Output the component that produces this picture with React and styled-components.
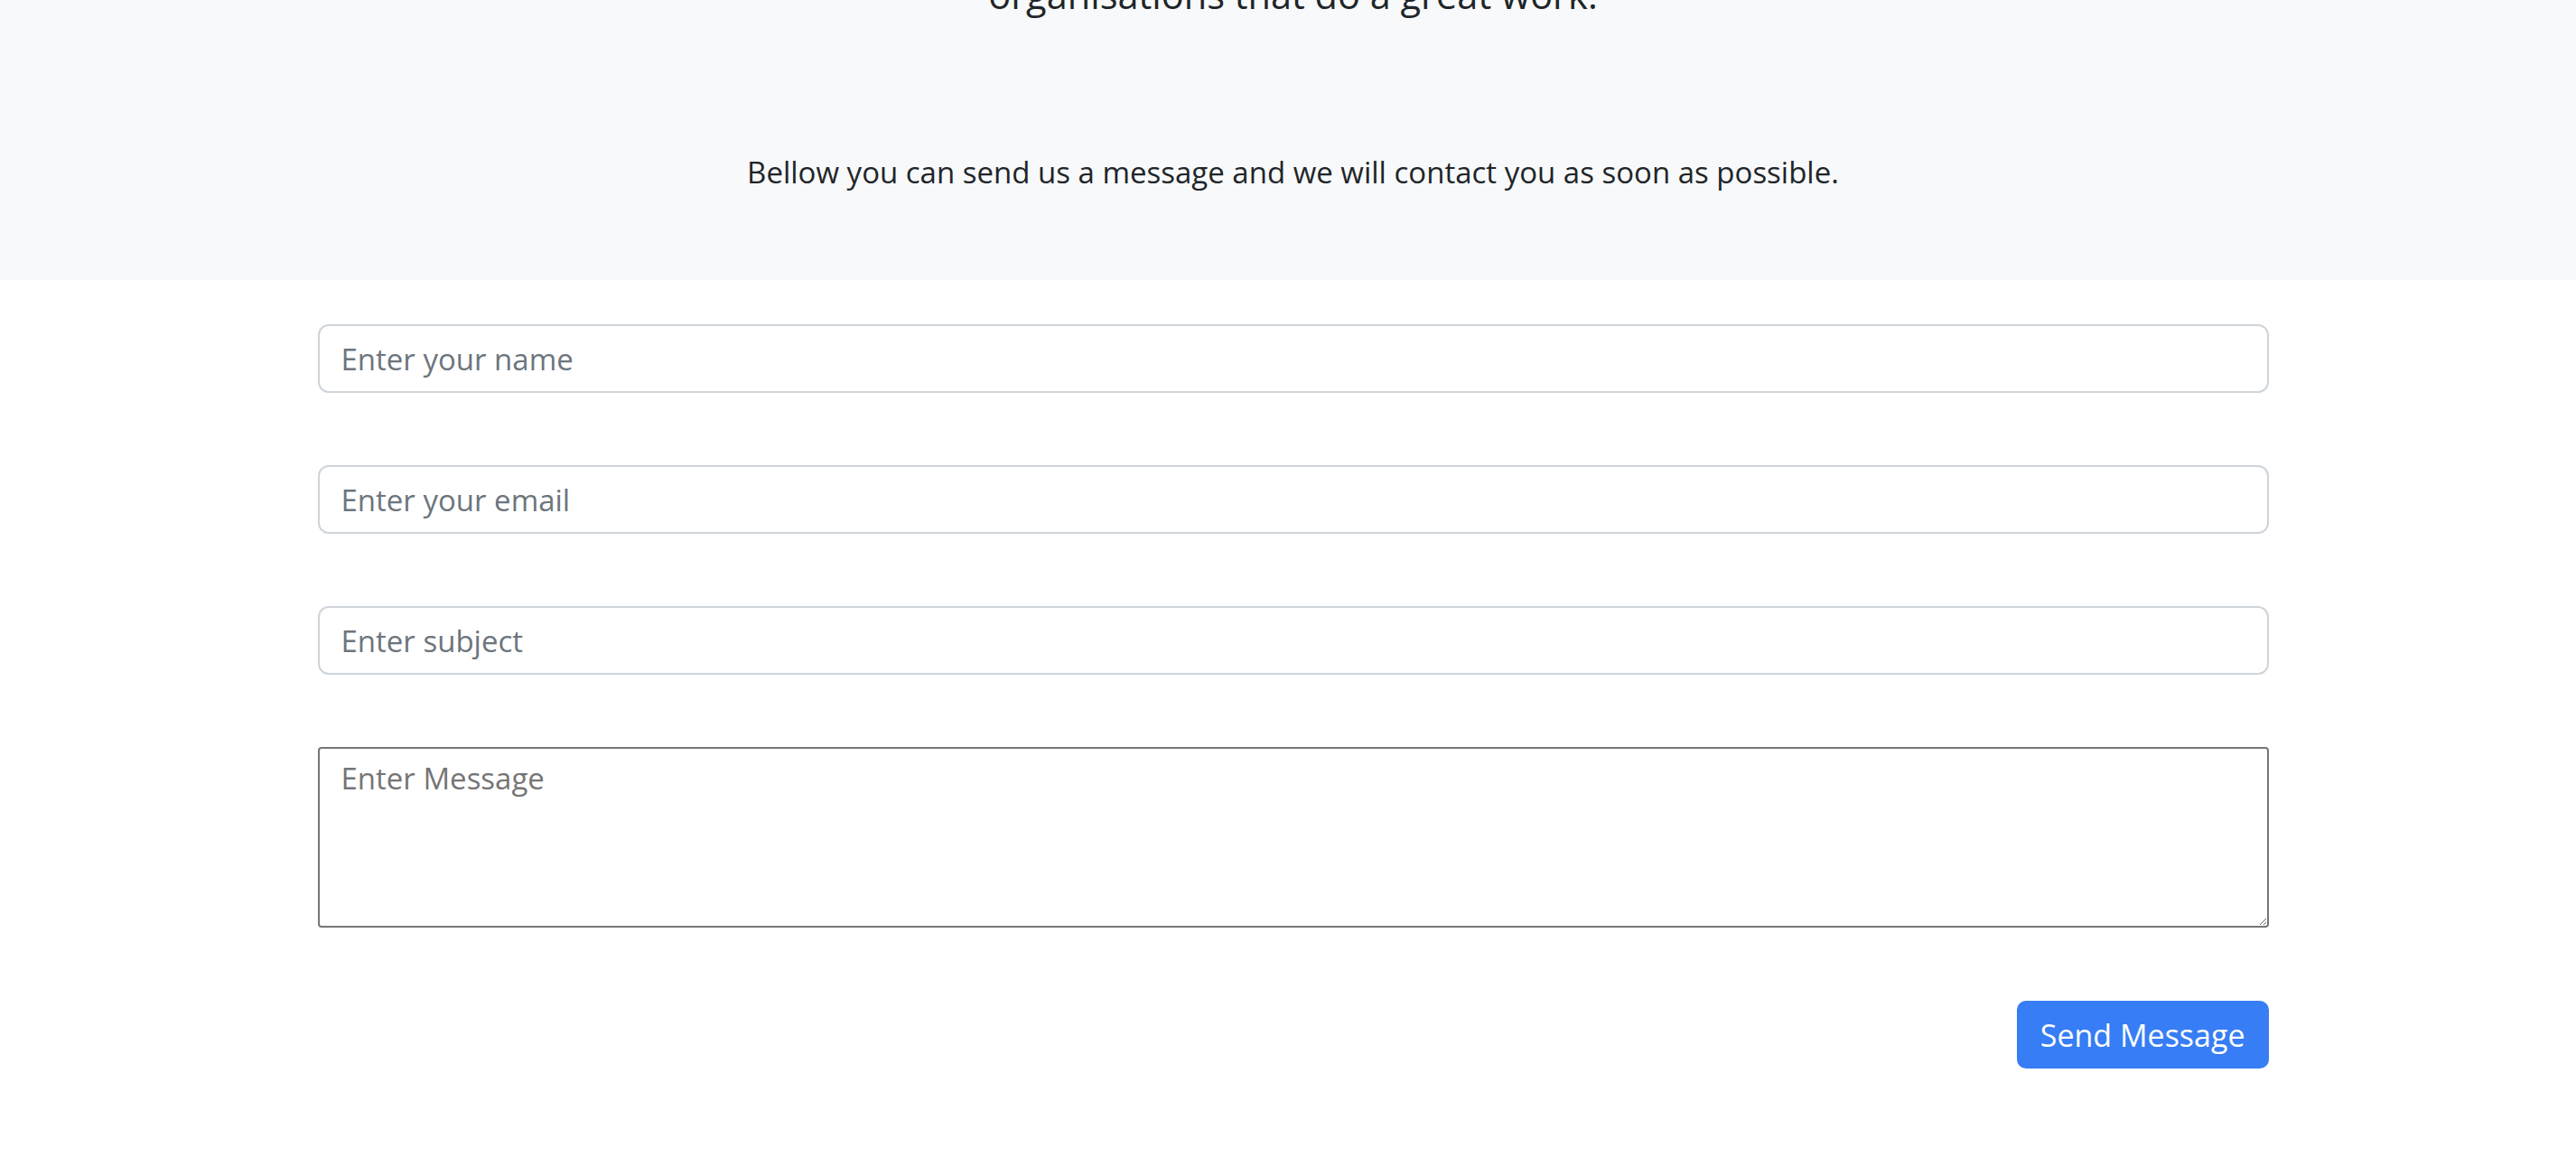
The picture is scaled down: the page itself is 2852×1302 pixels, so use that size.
import React from "react";
import styled, { createGlobalStyle } from "styled-components";

const Global = createGlobalStyle`
  html, body { margin: 0; padding: 0; background: #ffffff; }
  body { font-family: "Open Sans", Lato, sans-serif; color: #212529; overflow: hidden; }
  * { box-sizing: border-box; }
`;

const Page = styled.div`
  width: 2852px;
  min-height: 1302px;
  padding-left: 11px;
`;

const Hero = styled.section`
  background: #f8f9fa;
  height: 310px;
  margin-left: -11px;
  padding-left: 11px;
  display: flex;
  flex-direction: column;
  align-items: center;
  overflow: hidden;
`;

const Heading = styled.h2`
  margin: -30px 0 0;
  font-size: 41.5px;
  line-height: 48px;
  font-weight: 400;
  color: #212529;
`;

const Lead = styled.p`
  margin: 154px 0 0;
  font-size: 33px;
  line-height: 38px;
  color: #212529;
`;

const Form = styled.form`
  width: 2160px;
  margin: 49px auto 0;
  display: flex;
  flex-direction: column;
  gap: 80px;
`;

const Input = styled.input`
  display: block;
  width: 100%;
  height: 76px;
  padding: 0 24px;
  border: 2px solid #ced4da;
  border-radius: 12px;
  background: #fff;
  font-family: "Open Sans", Lato, sans-serif;
  font-size: 33px;
  color: #212529;
  &::placeholder { color: #6c757d; opacity: 1; }
`;

const TextArea = styled.textarea`
  display: block;
  width: 100%;
  height: 200px;
  padding: 12px 24px;
  border: 2px solid #767676;
  border-radius: 4px;
  background: #fff;
  font-family: "Open Sans", Lato, sans-serif;
  font-size: 33px;
  line-height: 1.25;
  color: #212529;
  resize: vertical;
  &::placeholder { color: #757575; opacity: 1; }
`;

const Actions = styled.div`
  display: flex;
  justify-content: flex-end;
  margin-top: 1px;
`;

const Button = styled.button`
  height: 75px;
  padding: 0 26px;
  border: none;
  border-radius: 10px;
  background: #377df5;
  color: #ffffff;
  font-family: "Open Sans", Lato, sans-serif;
  font-size: 34px;
  cursor: pointer;
`;

export default function App() {
  return (
    <>
      <Global />
      <Page>
        <Hero>
          <Heading>organisations that do a great work.</Heading>
          <Lead>Bellow you can send us a message and we will contact you as soon as possible.</Lead>
        </Hero>
        <Form onSubmit={(e) => e.preventDefault()}>
          <Input type="text" placeholder="Enter your name" />
          <Input type="email" placeholder="Enter your email" />
          <Input type="text" placeholder="Enter subject" />
          <TextArea placeholder="Enter Message" />
          <Actions>
            <Button type="submit">Send Message</Button>
          </Actions>
        </Form>
      </Page>
    </>
  );
}
